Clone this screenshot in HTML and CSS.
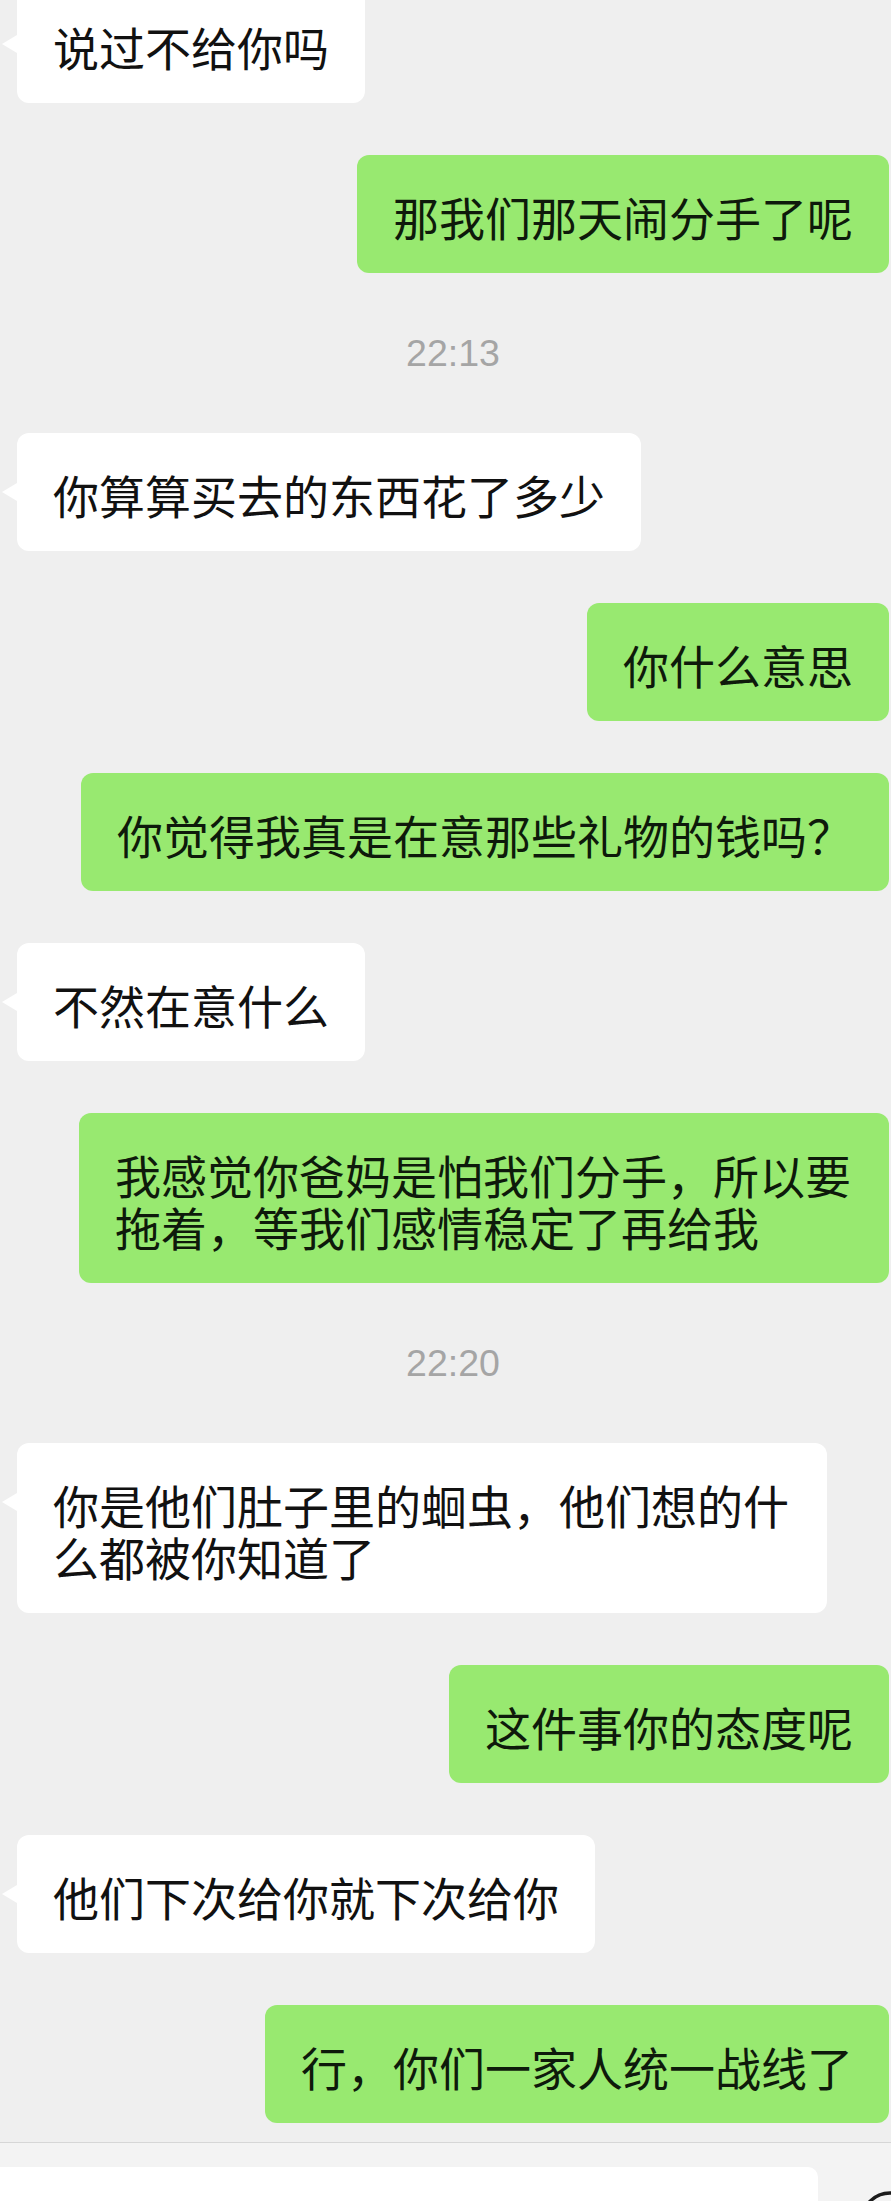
FILE: index.html
```html
<!DOCTYPE html>
<html lang="zh-CN">
<head>
    <meta charset="UTF-8">
    <meta name="viewport" content="width=device-width, initial-scale=1.0">
    <title>聊天</title>

    <link rel="stylesheet" href="styles.css">
</head>
<body>
    <div class="chat">
        <div class="msg other">说过不给你吗</div>
        <div class="msg mine">那我们那天闹分手了呢</div>

        <div class="time">22:13</div>

        <div class="msg other">你算算买去的东西花了多少</div>
        <div class="msg mine">你什么意思</div>
        <div class="msg mine">你觉得我真是在意那些礼物的钱吗？</div>
        <div class="msg other">不然在意什么</div>
        <div class="msg mine">我感觉你爸妈是怕我们分手，所以要拖着，等我们感情稳定了再给我</div>

        <div class="time">22:20</div>

        <div class="msg other">你是他们肚子里的蛔虫，他们想的什么都被你知道了</div>
        <div class="msg mine">这件事你的态度呢</div>
        <div class="msg other">他们下次给你就下次给你</div>
        <div class="msg mine">行，你们一家人统一战线了</div>
    </div>

    <div class="footer">
        <div class="input"></div>
        <svg class="emoji" width="60" height="60" viewBox="0 0 60 60">
            <circle cx="30" cy="30" r="28" fill="none" stroke="#1b1b1b" stroke-width="3.5"/>
            <circle cx="21" cy="25" r="3" fill="#1b1b1b"/>
            <circle cx="39" cy="25" r="3" fill="#1b1b1b"/>
        </svg>
    </div>
</body>
</html>
```

FILE: styles.css
```css
html{
    overflow: hidden;
}

body{
    margin: 0;
    background-color: #efefef;
    font-family: "Noto Sans CJK SC", sans-serif;
    color: #111;
}

.chat{
    display: flex;
    flex-direction: column;
    gap: 52px;
    margin-top: -15px;
    padding: 0 2px 19px 17px;
}

.msg{
    position: relative;
    max-width: 810px;
    box-sizing: border-box;
    padding: 35px 36px 31px;
    border-radius: 12px;
    font-size: 46px;
    line-height: 52px;
}

.other{
    align-self: flex-start;
    background-color: #fff;
}

/* little arrow on the left of the white bubbles */
.other::before{
    content: "";
    position: absolute;
    left: -15px;
    top: 50px;
    border-top: 9px solid transparent;
    border-bottom: 9px solid transparent;
    border-right: 15px solid #fff;
}

.mine{
    align-self: flex-end;
    background-color: #98e970;
    color: #0e1a0b;
}

.time{
    height: 56px;
    line-height: 56px;
    text-align: center;
    font-family: "Liberation Sans", Arial, sans-serif;
    font-size: 37.5px;
    color: #a5a5a5;
}

.footer{
    display: flex;
    align-items: flex-start;
    height: 34px;
    padding-top: 24px;
    border-top: 1px solid #d6d6d6;
    background-color: #f3f3f3;
    overflow: hidden;
}

.input{
    flex: 0 0 818px;
    height: 60px;
    background-color: #fff;
    border-top-right-radius: 10px;
}

.emoji{
    flex-shrink: 0;
    margin-left: 42px;
    margin-top: 24px;
}
```
